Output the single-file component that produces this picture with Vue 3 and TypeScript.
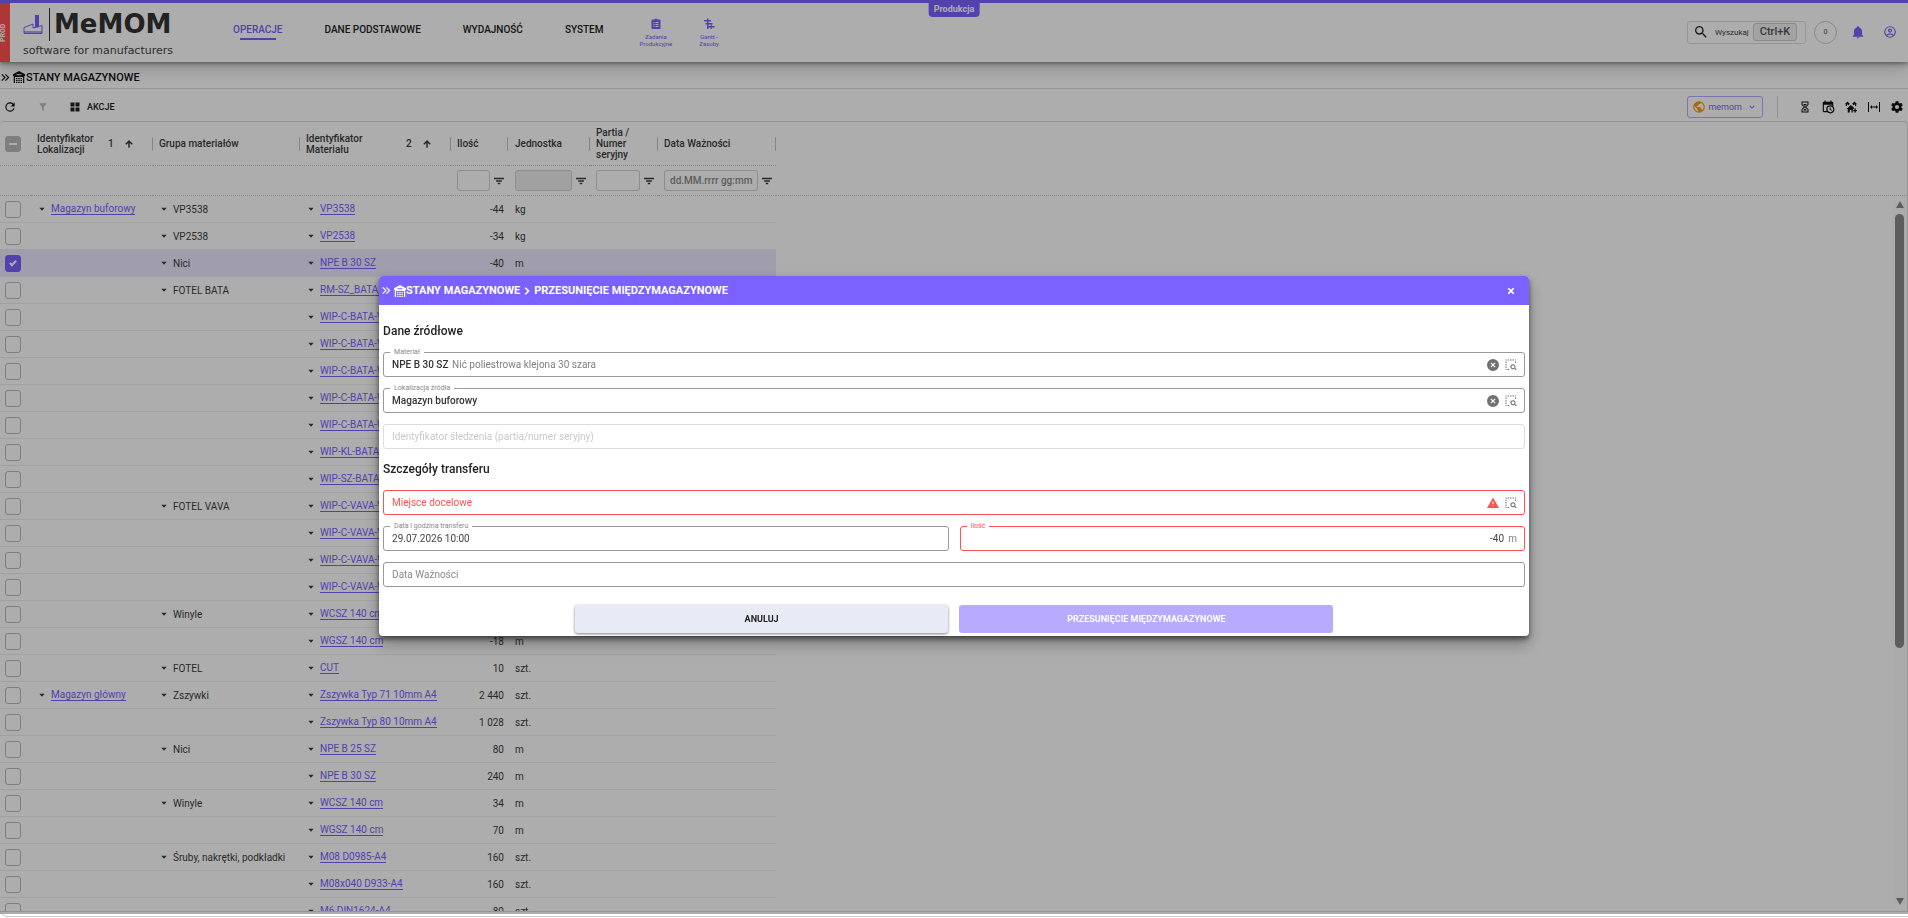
<script setup lang="ts">
import { ref } from 'vue'

interface StockRow {
  location?: string
  group?: string
  material: string
  quantity: string
  unit: string
  selected?: boolean
}

const icons: Record<string, string> = {
  refresh: 'M17.65,6.35C16.2,4.9 14.21,4 12,4A8,8 0 0,0 4,12A8,8 0 0,0 12,20C15.73,20 18.84,17.45 19.73,14H17.65C16.83,16.33 14.61,18 12,18A6,6 0 0,1 6,12A6,6 0 0,1 12,6C13.66,6 15.14,6.69 16.22,7.78L13,11H20V4L17.65,6.35Z',
  filter: 'M14,12V19.88C14.04,20.18 13.94,20.5 13.71,20.71C13.32,21.1 12.69,21.1 12.3,20.71L10.29,18.7C10.06,18.47 9.96,18.16 10,17.87V12H9.97L4.21,4.62C3.87,4.19 3.95,3.56 4.38,3.22C4.57,3.08 4.78,3 5,3H19C19.22,3 19.43,3.08 19.62,3.22C20.05,3.56 20.13,4.19 19.79,4.62L14.03,12H14Z',
  grid: 'M3,11H11V3H3M3,21H11V13H3M13,21H21V13H13M13,3V11H21V3',
  doubleChevron: 'M5.59,7.41L7,6L13,12L7,18L5.59,16.59L10.17,12L5.59,7.41M11.59,7.41L13,6L19,12L13,18L11.59,16.59L16.17,12L11.59,7.41Z',
  chevronRight: 'M8.59,16.58L13.17,12L8.59,7.41L10,6L16,12L10,18L8.59,16.58Z',
  chevronDown: 'M7.41,8.58L12,13.17L16.59,8.58L18,10L12,16L6,10L7.41,8.58Z',
  warehouse: 'M12,0L0,6.5V10H1.5V24H4V12H20V24H22.5V10H24V6.5L12,0M7,6.5H17V8.5H7V6.5M6,14H9V16.5H6V14M10.5,14H13.5V16.5H10.5V14M15,14H18V16.5H15V14M6,18H9V20.500H6V18M10.5,18H13.5V20.500H10.5V18M15,18H18V20.500H15V18M6,22H9V24H6V22M10.500,22H13.500V24H10.500V22M15,22H18V24H15V22',
  search: 'M9.5,3A6.5,6.5 0 0,1 16,9.5C16,11.11 15.41,12.59 14.44,13.73L14.71,14H15.5L20.5,19L19,20.5L14,15.5V14.71L13.73,14.44C12.59,15.41 11.11,16 9.5,16A6.5,6.5 0 0,1 3,9.5A6.5,6.5 0 0,1 9.5,3M9.5,5C7,5 5,7 5,9.5C5,12 7,14 9.5,14C12,14 14,12 14,9.5C14,7 12,5 9.5,5Z',
  bell: 'M21,19V20H3V19L5,17V11C5,7.9 7.03,5.17 10,4.29V4A2,2 0 0,1 12,2A2,2 0 0,1 14,4V4.29C16.97,5.17 19,7.9 19,11V17L21,19M14,21A2,2 0 0,1 12,23A2,2 0 0,1 10,21',
  account: 'M12,2A10,10 0 0,0 2,12A10,10 0 0,0 12,22A10,10 0 0,0 22,12A10,10 0 0,0 12,2M7.07,18.28C7.5,17.38 10.12,16.5 12,16.5C13.88,16.5 16.5,17.38 16.93,18.28C15.57,19.36 13.86,20 12,20C10.14,20 8.43,19.36 7.07,18.28M18.36,16.83C16.93,15.09 13.46,14.5 12,14.5C10.54,14.5 7.07,15.09 5.64,16.83C4.62,15.5 4,13.82 4,12C4,7.59 7.59,4 12,4C16.41,4 20,7.59 20,12C20,13.82 19.38,15.5 18.36,16.83M12,6C10.06,6 8.5,7.56 8.5,9.5C8.5,11.44 10.06,13 12,13C13.94,13 15.5,11.44 15.5,9.5C15.5,7.56 13.94,6 12,6M12,11A1.5,1.5 0 0,1 10.5,9.5A1.5,1.5 0 0,1 12,8A1.5,1.5 0 0,1 13.5,9.5A1.5,1.5 0 0,1 12,11Z',
  earth: 'M17.9,17.39C17.64,16.59 16.89,16 16,16H15V13A1,1 0 0,0 14,12H8V10H10A1,1 0 0,0 11,9V7H13A2,2 0 0,0 15,5V4.59C17.93,5.77 20,8.64 20,12C20,14.08 19.2,15.97 17.9,17.39M11,19.93C7.05,19.44 4,16.08 4,12C4,11.38 4.08,10.78 4.21,10.21L9,15V16A2,2 0 0,0 11,18M12,2A10,10 0 0,0 2,12A10,10 0 0,0 12,22A10,10 0 0,0 22,12A10,10 0 0,0 12,2Z',
  sand: 'M5,1H19V7.5L14.5,12L19,16.5V23H5V16.5L9.500,12L5,7.500V1M17,17L12,12.500L7,17V21H17V17M12,11.500L17,7V3H7V7L12,11.500M9,6H15V7L12,9.500L9,7V6M12,15L15,18V19H9V18L12,15Z',
  calendarClock: 'M15,13H16.5V15.82L18.94,17.23L18.19,18.53L15,16.69V13M19,8H5V19H9.67C9.24,18.09 9,17.07 9,16A7,7 0 0,1 16,9C17.07,9 18.09,9.24 19,9.67V8M5,21C3.89,21 3,20.1 3,19V5C3,3.89 3.89,3 5,3H6V1H8V3H16V1H18V3H19A2,2 0 0,1 21,5V11.1C22.24,12.36 23,14.09 23,16A7,7 0 0,1 16,23C14.09,23 12.36,22.24 11.1,21H5M16,11.15A4.85,4.85 0 0,0 11.15,16C11.15,18.68 13.32,20.85 16,20.85A4.85,4.85 0 0,0 20.85,16C20.85,13.32 18.68,11.15 16,11.15Z',
  homes: 'M5,1L0,6H1.500V10H4V7H6V9L8.500,7V6H10L5,1M19,1L14,6H15.500V7L18,9V7H20V10H22.500V6H24L19,1M11.500,8L3,16H5.500V23H9.500V18H13V23H15.500V17L19,14.500L11.500,8M19,15V18H16.500V20.500H19V23H21.500V20.500H24V18H21.500V15H19Z',
  expand: 'M0,2H2V22H0V2M22,2H24V22H22V2M8,8V11H16V8L20,12L16,16V13H8V16L4,12L8,8Z',
  cog: 'M12,15.5A3.5,3.5 0 0,1 8.5,12A3.5,3.5 0 0,1 12,8.5A3.5,3.5 0 0,1 15.5,12A3.5,3.5 0 0,1 12,15.5M19.43,12.97C19.47,12.65 19.5,12.33 19.5,12C19.5,11.67 19.47,11.34 19.43,11L21.54,9.37C21.73,9.22 21.78,8.95 21.66,8.73L19.66,5.27C19.54,5.05 19.27,4.96 19.05,5.05L16.56,6.05C16.04,5.66 15.5,5.32 14.87,5.07L14.5,2.42C14.46,2.18 14.25,2 14,2H10C9.75,2 9.54,2.18 9.5,2.42L9.13,5.07C8.5,5.32 7.96,5.66 7.44,6.05L4.95,5.05C4.73,4.96 4.46,5.05 4.34,5.27L2.34,8.73C2.21,8.95 2.27,9.22 2.46,9.37L4.57,11C4.53,11.34 4.5,11.67 4.5,12C4.5,12.33 4.53,12.65 4.57,12.97L2.46,14.63C2.27,14.78 2.21,15.05 2.34,15.27L4.34,18.73C4.46,18.95 4.73,19.03 4.95,18.95L7.44,17.94C7.96,18.34 8.5,18.68 9.13,18.93L9.5,21.58C9.54,21.82 9.75,22 10,22H14C14.25,22 14.46,21.82 14.5,21.58L14.87,18.93C15.5,18.67 16.04,18.34 16.56,17.94L19.05,18.95C19.27,19.03 19.54,18.95 19.66,18.73L21.66,15.27C21.78,15.05 21.73,14.78 21.54,14.63L19.43,12.97Z',
  arrowUp: 'M10.2,21V9.5L5.5,14L3,11.2L12,2.4L21,11.2L18.5,14L13.8,9.5V21H10.2Z',
  bars: 'M0,4H24V8H0V4M5,10H19V14H5V10M9,16H15V20H9V16Z',
  caret: 'M4,8H20L12,17Z',
  close: 'M20,6.8L17.2,4L12,9.2L6.8,4L4,6.8L9.2,12L4,17.2L6.8,20L12,14.8L17.2,20L20,17.2L14.8,12L20,6.8Z',
  clear: 'M12,0A12,12 0 1,0 12,24A12,12 0 1,0 12,0M17,15.4L15.4,17L12,13.6L8.6,17L7,15.4L10.4,12L7,8.6L8.6,7L12,10.4L15.4,7L17,8.6L13.6,12L17,15.4Z',
  alert: 'M13,14H11V9H13M13,18H11V16H13M0,22H24L12,1L0,22Z',
  pick: 'M1,1H3V3H1V1M5,1H8V3H5V1M10,1H13V3H10V1M15,1H18V3H15V1M20,1H22V3H20V1M1,5H3V8H1V5M1,10H3V13H1V10M1,15H3V18H1V15M1,20H3V22H1V20M5,20H8V22H5V20M20,5H22V8H20V5M16,10.5A5,5 0 0,1 20.3,18L23.5,21.2L22,22.7L18.8,19.5A5,5 0 1,1 16,10.5M16,12.5A3,3 0 1,0 16,18.5A3,3 0 1,0 16,12.5Z',
  clipboard: 'M19,3H14.8C14.4,1.8 13.3,1 12,1C10.7,1 9.6,1.8 9.2,3H5A2,2 0 0,0 3,5V20A2,2 0 0,0 5,22H19A2,2 0 0,0 21,20V5A2,2 0 0,0 19,3M7,8H9V10H7V8M11,8H17V10H11V8M7,12H9V14H7V12M11,12H17V14H11V12M7,16H9V18H7V16M11,16H17V18H11V16Z',
  gantt: 'M2,4H8V1H11V4H16V7H11V10H19V13H11V16H15V13.500H17.500V16H23V19H17.500V22H15V19H11V22H8V13H5V10H8V7H2V4Z',
}

const navItems = ['OPERACJE', 'DANE PODSTAWOWE', 'WYDAJNOŚĆ', 'SYSTEM']
const tools = [
  { icon: 'sand', label: 'Historia' },
  { icon: 'calendarClock', label: 'Kalendarz' },
  { icon: 'homes', label: 'Magazyny' },
  { icon: 'expand', label: 'Szerokość kolumn' },
  { icon: 'cog', label: 'Ustawienia' },
]

const rows = ref<StockRow[]>([
  { location: 'Magazyn buforowy', group: 'VP3538', material: 'VP3538', quantity: '-44', unit: 'kg' },
  { group: 'VP2538', material: 'VP2538', quantity: '-34', unit: 'kg' },
  { group: 'Nici', material: 'NPE B 30 SZ', quantity: '-40', unit: 'm', selected: true },
  { group: 'FOTEL BATA', material: 'RM-SZ_BATA_', quantity: '', unit: '' },
  { material: 'WIP-C-BATA-V', quantity: '', unit: '' },
  { material: 'WIP-C-BATA-V', quantity: '', unit: '' },
  { material: 'WIP-C-BATA-W', quantity: '', unit: '' },
  { material: 'WIP-C-BATA-W', quantity: '', unit: '' },
  { material: 'WIP-C-BATA-W', quantity: '', unit: '' },
  { material: 'WIP-KL-BATA-', quantity: '', unit: '' },
  { material: 'WIP-SZ-BATA-', quantity: '', unit: '' },
  { group: 'FOTEL VAVA', material: 'WIP-C-VAVA-V', quantity: '', unit: '' },
  { material: 'WIP-C-VAVA-V', quantity: '', unit: '' },
  { material: 'WIP-C-VAVA-W', quantity: '', unit: '' },
  { material: 'WIP-C-VAVA-W', quantity: '', unit: '' },
  { group: 'Winyle', material: 'WCSZ 140 cm', quantity: '', unit: '' },
  { material: 'WGSZ 140 cm', quantity: '-18', unit: 'm' },
  { group: 'FOTEL', material: 'CUT', quantity: '10', unit: 'szt.' },
  { location: 'Magazyn główny', group: 'Zszywki', material: 'Zszywka Typ 71 10mm A4', quantity: '2 440', unit: 'szt.' },
  { material: 'Zszywka Typ 80 10mm A4', quantity: '1 028', unit: 'szt.' },
  { group: 'Nici', material: 'NPE B 25 SZ', quantity: '80', unit: 'm' },
  { material: 'NPE B 30 SZ', quantity: '240', unit: 'm' },
  { group: 'Winyle', material: 'WCSZ 140 cm', quantity: '34', unit: 'm' },
  { material: 'WGSZ 140 cm', quantity: '70', unit: 'm' },
  { group: 'Śruby, nakrętki, podkładki', material: 'M08 D0985-A4', quantity: '160', unit: 'szt.' },
  { material: 'M08x040 D933-A4', quantity: '160', unit: 'szt.' },
  { material: 'M6 DIN1624-A4', quantity: '80', unit: 'szt.' },
])

const material = ref('NPE B 30 SZ')
const source = ref('Magazyn buforowy')
const tracking = ref('')
const target = ref('')
const transferDate = ref('29.07.2026 10:00')
const quantity = ref('-40')
const expiry = ref('')
</script>

<template>
  <div class="app">
    <header class="topbar">
      <div class="env-strip">PROD</div>
      <a class="brand" href="#">
        <span class="brand-main">
          <svg class="factory" viewBox="0 0 20 21" aria-hidden="true">
            <path d="M1 19.500V13.500L10 10V14L19 11.500V19.500Z" fill="none" stroke="currentColor" stroke-width="1" />
            <path d="M12 1H16V13L12 14Z" fill="currentColor" />
            <path d="M1 17H19V20H1Z" fill="currentColor" opacity=".6" />
          </svg>
          <span class="brand-name">MeMOM</span>
        </span>
        <span class="tagline">software for manufacturers</span>
      </a>
      <nav class="main-nav">
        <a v-for="(item, i) in navItems" :key="item" href="#" :class="{ active: i === 0 }">{{ item }}</a>
      </nav>
      <div class="shortcuts">
        <a href="#"><svg viewBox="0 0 24 24"><path :d="icons.clipboard" fill-rule="evenodd" /></svg>Zadania<br />Produkcyjne</a>
        <a href="#"><svg viewBox="0 0 24 24"><path :d="icons.gantt" /></svg>Gantt -<br />Zasoby</a>
      </div>
      <div class="top-actions">
        <button class="search" type="button">
          <svg class="i16" viewBox="0 0 24 24"><path :d="icons.search" /></svg>
          <span>Wyszukaj</span>
          <kbd>Ctrl+K</kbd>
        </button>
        <button class="counter" type="button">0</button>
        <button class="icon-btn violet" type="button" aria-label="Powiadomienia"><svg class="i14" viewBox="0 0 24 24"><path :d="icons.bell" /></svg></button>
        <button class="icon-btn violet" type="button" aria-label="Konto"><svg class="i14" viewBox="0 0 24 24"><path :d="icons.account" /></svg></button>
      </div>
      <div class="mode-badge">Produkcja</div>
    </header>

    <div class="crumbs">
      <svg class="double" viewBox="5 5 15 14"><path :d="icons.doubleChevron" /></svg>
      <h1><svg class="i12" viewBox="0 0 24 24"><path :d="icons.warehouse" fill-rule="evenodd" /></svg>STANY MAGAZYNOWE</h1>
    </div>

    <div class="toolbar">
      <button class="icon-btn" type="button" aria-label="Odśwież"><svg class="i14" viewBox="0 0 24 24"><path :d="icons.refresh" /></svg></button>
      <button class="icon-btn" type="button" aria-label="Filtr" disabled><svg class="i10" viewBox="0 0 24 24"><path :d="icons.filter" /></svg></button>
      <button class="actions-btn" type="button"><svg class="i12" viewBox="0 0 24 24"><path :d="icons.grid" /></svg>AKCJE</button>
      <div class="toolbar-right">
        <button class="tenant" type="button">
          <svg class="i14 orange" viewBox="0 0 24 24"><path :d="icons.earth" /></svg>
          <span>memom</span>
          <svg class="i10" viewBox="0 0 24 24"><path :d="icons.chevronDown" /></svg>
        </button>
        <div class="tools">
          <button v-for="tool in tools" :key="tool.icon" class="icon-btn" type="button" :aria-label="tool.label">
            <svg :class="tool.icon === 'cog' || tool.icon === 'calendarClock' ? 'i14' : 'i12'" viewBox="0 0 24 24"><path :d="icons[tool.icon]" fill-rule="evenodd" /></svg>
          </button>
        </div>
      </div>
    </div>

    <main class="grid">
      <table>
        <colgroup>
          <col class="c-check" /><col class="c-loc" /><col class="c-group" /><col class="c-mat" /><col class="c-qty" />
          <col class="c-unit" /><col class="c-lot" /><col class="c-date" /><col />
        </colgroup>
        <thead>
          <tr class="titles">
            <th><input type="checkbox" class="partial" aria-label="Zaznacz wszystkie" /></th>
            <th><div class="th sorted"><span>Identyfikator Lokalizacji</span><i>1</i><svg class="i10" viewBox="0 0 24 24"><path :d="icons.arrowUp" /></svg></div></th>
            <th><div class="th">Grupa materiałów</div></th>
            <th><div class="th sorted mat"><span>Identyfikator Materiału</span><i>2</i><svg class="i10" viewBox="0 0 24 24"><path :d="icons.arrowUp" /></svg></div></th>
            <th><div class="th">Ilość</div></th>
            <th><div class="th">Jednostka</div></th>
            <th><div class="th">Partia /<br />Numer<br />seryjny</div></th>
            <th><div class="th">Data Ważności</div></th>
            <th class="filler"></th>
          </tr>
          <tr class="filters">
            <th></th><th></th><th></th><th></th>
            <th><div class="filter"><input type="text" aria-label="Ilość" /><svg class="i10" viewBox="0 0 24 24"><path :d="icons.bars" /></svg></div></th>
            <th><div class="filter"><input type="text" aria-label="Jednostka" disabled /><svg class="i10" viewBox="0 0 24 24"><path :d="icons.bars" /></svg></div></th>
            <th><div class="filter"><input type="text" aria-label="Partia / Numer seryjny" /><svg class="i10" viewBox="0 0 24 24"><path :d="icons.bars" /></svg></div></th>
            <th><div class="filter"><input type="text" placeholder="dd.MM.rrrr gg:mm" aria-label="Data Ważności" /><svg class="i10" viewBox="0 0 24 24"><path :d="icons.bars" /></svg></div></th>
            <th></th>
          </tr>
        </thead>
        <tbody>
          <tr v-for="(row, i) in rows" :key="i" :class="{ selected: row.selected }">
            <td><input v-model="row.selected" type="checkbox" :aria-label="row.material" /></td>
            <td><div v-if="row.location" class="cell"><svg class="i8" viewBox="0 0 24 24"><path :d="icons.caret" /></svg><a href="#">{{ row.location }}</a></div></td>
            <td><div v-if="row.group" class="cell"><svg class="i8" viewBox="0 0 24 24"><path :d="icons.caret" /></svg>{{ row.group }}</div></td>
            <td><div class="cell"><svg class="i8" viewBox="0 0 24 24"><path :d="icons.caret" /></svg><a href="#">{{ row.material }}</a></div></td>
            <td class="num">{{ row.quantity }}</td>
            <td class="unit">{{ row.unit }}</td>
            <td></td>
            <td></td>
            <td class="filler"></td>
          </tr>
        </tbody>
      </table>
      <div class="scrollbar" aria-hidden="true">
        <span class="tip up"></span>
        <span class="rail"><span class="thumb"></span></span>
        <span class="tip down"></span>
      </div>
    </main>

    <div class="backdrop">
      <section class="dialog" role="dialog" aria-modal="true" aria-labelledby="dialog-title">
        <header>
          <svg class="double" viewBox="5 5 15 14"><path :d="icons.doubleChevron" /></svg>
          <h2 id="dialog-title">
            <svg class="i12" viewBox="0 0 24 24"><path :d="icons.warehouse" fill-rule="evenodd" /></svg><span>STANY MAGAZYNOWE</span>
            <svg class="i14 sep" viewBox="0 0 24 24"><path :d="icons.chevronRight" /></svg><span>PRZESUNIĘCIE MIĘDZYMAGAZYNOWE</span>
          </h2>
          <button class="close" type="button" aria-label="Zamknij"><svg class="i10" viewBox="0 0 24 24"><path :d="icons.close" /></svg></button>
        </header>
        <form @submit.prevent>
          <h3>Dane źródłowe</h3>
          <div class="field">
            <label for="f-material">Materiał</label>
            <input id="f-material" v-model="material" class="strong code" type="text" />
            <span class="hint">Nić poliestrowa klejona 30 szara</span>
            <button type="button" aria-label="Wyczyść materiał"><svg class="i12" viewBox="0 0 24 24"><path :d="icons.clear" fill-rule="evenodd" /></svg></button>
            <button type="button" aria-label="Wybierz materiał"><svg class="i12" viewBox="0 0 24 24"><path :d="icons.pick" fill-rule="evenodd" /></svg></button>
          </div>
          <div class="field">
            <label for="f-source">Lokalizacja źródła</label>
            <input id="f-source" v-model="source" class="strong" type="text" />
            <button type="button" aria-label="Wyczyść lokalizację"><svg class="i12" viewBox="0 0 24 24"><path :d="icons.clear" fill-rule="evenodd" /></svg></button>
            <button type="button" aria-label="Wybierz lokalizację"><svg class="i12" viewBox="0 0 24 24"><path :d="icons.pick" fill-rule="evenodd" /></svg></button>
          </div>
          <div class="field off">
            <input v-model="tracking" type="text" placeholder="Identyfikator śledzenia (partia/numer seryjny)" aria-label="Identyfikator śledzenia (partia/numer seryjny)" disabled />
          </div>
          <h3>Szczegóły transferu</h3>
          <div class="field error">
            <input v-model="target" type="text" placeholder="Miejsce docelowe" aria-label="Miejsce docelowe" />
            <svg class="i12 alert" viewBox="0 0 24 24"><path :d="icons.alert" fill-rule="evenodd" /></svg>
            <button type="button" aria-label="Wybierz miejsce docelowe"><svg class="i12" viewBox="0 0 24 24"><path :d="icons.pick" fill-rule="evenodd" /></svg></button>
          </div>
          <div class="pair">
            <div class="field">
              <label for="f-date">Data i godzina transferu</label>
              <input id="f-date" v-model="transferDate" type="text" />
            </div>
            <div class="field error">
              <label for="f-qty">Ilość</label>
              <input id="f-qty" v-model="quantity" class="right" type="text" />
              <span class="suffix">m</span>
            </div>
          </div>
          <div class="field">
            <input v-model="expiry" type="text" placeholder="Data Ważności" aria-label="Data Ważności" />
          </div>
          <div class="buttons">
            <button class="cancel" type="button">ANULUJ</button>
            <button class="submit" type="submit" disabled>PRZESUNIĘCIE MIĘDZYMAGAZYNOWE</button>
          </div>
        </form>
      </section>
    </div>
  </div>
</template>

<style>
body { margin: 0; overflow: hidden; background: #fff; }
</style>

<style scoped>
* { box-sizing: border-box; }
.app {
  display: flex;
  flex-direction: column;
  height: calc(100vh - 1px);
  padding-bottom: 4px;
  border-bottom: 1px solid #ccc;
  border-radius: 0 0 0 8px;
  font-family: Roboto, "Noto Sans", sans-serif;
  font-size: 10px;
  color: #3c3c3c;
}
button, input { font: inherit; color: inherit; margin: 0; }
button { padding: 0; border: 0; background: none; }
a { color: #7b61ff; text-decoration: none; }
svg { display: block; flex: none; fill: currentColor; }
.i8 { width: 8px; height: 8px; }
.i10 { width: 10px; height: 10px; }
.i12 { width: 12px; height: 12px; }
.i14 { width: 14px; height: 14px; }
.i16 { width: 16px; height: 16px; }
.double { width: 9px; height: 9px; }

.topbar {
  position: relative;
  z-index: 1;
  flex: none;
  display: flex;
  align-items: center;
  height: 62px;
  border-top: 3px solid #7b61ff;
  background: #fff;
  box-shadow: 0 2px 4px rgba(0, 0, 0, .35), 0 6px 16px rgba(0, 0, 0, .2);
}
.env-strip {
  align-self: stretch;
  width: 10px;
  padding-left: 4px;
  background: #ff5252;
  color: #fff;
  font-size: 7px;
  font-weight: 700;
  line-height: 6px;
  text-align: center;
  writing-mode: vertical-rl;
  transform: rotate(180deg);
}
.brand { display: flex; flex-direction: column; gap: 4px; margin-left: 13px; width: 149px; white-space: nowrap; }
.brand-main { display: flex; align-items: center; height: 33px; }
.factory { width: 20px; height: 21px; color: #7b61ff; margin-right: 6px; }
.brand-name {
  border-left: 1px solid #333;
  padding-left: 4px;
  color: #333;
  font-family: "DejaVu Sans", sans-serif;
  font-size: 26px;
  font-weight: 700;
  line-height: 33px;
}
.tagline { color: #444; font-family: "DejaVu Sans", sans-serif; font-size: 11px; line-height: 12px; }
.main-nav { display: flex; gap: 42px; margin-left: 61px; font-weight: 500; line-height: 16px; }
.main-nav a { display: flex; flex-direction: column; align-items: center; color: #222; padding-bottom: 10px; margin-top: 5px; }
.main-nav a.active { color: #7b61ff; padding-bottom: 8px; }
.main-nav a.active::after { content: ""; width: 36px; height: 2px; background: #7b61ff; }
.shortcuts { display: flex; gap: 27px; margin-left: 36px; font-size: 6px; line-height: 7px; text-align: center; }
.shortcuts svg { width: 12px; height: 12px; margin: 0 auto 3px; }
.top-actions { display: flex; align-items: center; margin-left: auto; padding-right: 9px; margin-top: -1px; }
.search { display: flex; align-items: center; width: 119px; height: 23px; padding-left: 5px; border: 1px solid #dedede; border-radius: 3px; font-size: 8px; }
.search svg { color: #222; margin-right: 6px; }
.search kbd { display: block; margin-left: auto; margin-right: 8px; width: 44px; border: 1px solid #ccc; border-radius: 3px; background: #f0f0f0; color: #555; font: 500 11px/16px Roboto, sans-serif; text-align: center; }
.counter { width: 23px; height: 23px; margin: 0 12px 0 8px; border: 1px solid #ccc; border-radius: 50%; color: #777; font-size: 7px; font-weight: 500; }
.icon-btn { display: flex; align-items: center; justify-content: center; width: 18px; height: 18px; color: #111; }
.icon-btn:disabled { color: #bbb; }
.violet { color: #7b61ff; }
.violet + .violet { margin-left: 14px; }
.mode-badge {
  position: absolute;
  top: 0;
  left: 50%;
  transform: translateX(-50%);
  padding: 0 5px 2px;
  border-radius: 0 0 4px 4px;
  background: #7b61ff;
  color: #fff;
  font-weight: 700;
  font-size: 9px;
  line-height: 12px;
}

.crumbs { flex: none; display: flex; align-items: center; gap: 3px; height: 27px; padding: 4px 0 0 1px; border-bottom: 1px solid #dcdcdc; color: #111; }
h1 { display: flex; align-items: center; gap: 1px; margin: 0; font-size: 11px; font-weight: 500; }

.toolbar { flex: none; display: flex; align-items: center; height: 32px; padding: 4px 2px 0 1px; }
.toolbar > .icon-btn + .icon-btn { margin-left: 15px; }
.actions-btn { display: flex; align-items: center; gap: 6px; margin-left: 17px; color: #222; font-size: 9px; font-weight: 500; }
.toolbar-right { display: flex; align-items: center; gap: 14px; margin-left: auto; }
.tenant { display: flex; align-items: center; justify-content: flex-end; gap: 2px; width: 76px; height: 22px; padding-right: 5px; border: 1px solid #b8aaff; border-radius: 3px; color: #7b61ff; font-size: 9px; }
.tenant span { margin-right: 3px; }
.orange { color: #f90; }
.tools { display: flex; gap: 5px; align-items: center; height: 22px; padding-left: 18px; border-left: 1px solid #d4d4d4; }

.grid { position: relative; flex: 1; min-height: 0; overflow: hidden; border: 1px solid #dcdcdc; border-left: 0; border-radius: 4px 4px 0 0; }
table { width: 100%; table-layout: fixed; border-collapse: separate; border-spacing: 0; }
.c-check { width: 31px; }
.c-loc { width: 122px; }
.c-group { width: 147px; }
.c-mat { width: 151px; }
.c-qty { width: 57px; }
.c-unit { width: 82px; }
.c-lot { width: 68px; }
.c-date { width: 118px; }
th, td { padding: 0 0 0 6px; text-align: left; font-weight: 400; }
th:first-child, td:first-child { padding-left: 5px; }
th { font-weight: 500; line-height: 11px; border-bottom: 1px dotted #c8c8c8; }
.titles th { height: 44px; }
.titles th.filler { border-bottom: 0; }
.th { display: flex; align-items: center; min-height: 13px; position: relative; }
th:not(:first-child) .th::after { content: ""; position: absolute; right: 0; top: 50%; height: 13px; border-right: 1px solid #c4c4c4; transform: translateY(-50%); }
.sorted span { width: 66px; }
.sorted i { margin-left: 5px; font-style: normal; }
.sorted svg { margin-left: 10px; }
.sorted.mat i { margin-left: 34px; }
.filters th { height: 30px; }
.filter { display: flex; align-items: center; gap: 4px; }
.filter input { flex: 1; min-width: 0; height: 21px; padding: 0 0 0 5px; border: 1px solid #d0d0d0; border-radius: 3px; background: transparent; }
.filter input:disabled { background: #eee; }
.filter svg { margin-right: 4px; }
input::placeholder { color: #8a8a8a; opacity: 1; }
td { height: 27px; border-bottom: 1px solid #eee; white-space: nowrap; }
td.filler { border-bottom: 0; }
.selected td:not(.filler) { background: #ece8ff; }
.cell { display: flex; align-items: center; gap: 5px; padding-left: 1px; }
.cell a { border-bottom: 1px solid #7b61ff; line-height: 11px; }
td.num { padding-right: 4px; text-align: right; }
td.unit, .titles th:nth-child(6), .filters th:nth-child(6) { padding-left: 7px; }
input[type="checkbox"] {
  appearance: none;
  position: relative;
  display: block;
  width: 16px;
  height: 17px;
  border: 1px solid #bbb;
  border-radius: 3px;
}
input[type="checkbox"]:checked { background: #7b61ff; border-color: #7b61ff; }
input[type="checkbox"]:checked::before { content: ""; position: absolute; left: 5px; top: 3px; width: 4px; height: 7px; border: solid #fff; border-width: 0 2px 2px 0; transform: rotate(45deg); box-sizing: content-box; width: 2px; height: 5px; }
input[type="checkbox"].partial { height: 16px; background: #bbb; }
.partial::before { content: ""; position: absolute; left: 3px; top: 6px; width: 8px; height: 2px; background: #fff; }

.scrollbar { position: absolute; top: 79px; right: 1px; bottom: 6px; width: 13px; display: flex; flex-direction: column; align-items: center; gap: 6px; background: #fdfdfd; }
.tip { flex: none; border: 4px solid transparent; }
.tip.up { border-top: 0; border-bottom: 7px solid #888; }
.tip.down { border-bottom: 0; border-top: 7px solid #888; }
.rail { flex: 1; width: 9px; }
.thumb { display: block; height: 64%; border-radius: 5px; background: #8a8a8a; }

.backdrop { position: fixed; inset: 0 0 4px; z-index: 5; display: flex; align-items: center; justify-content: center; padding-bottom: 2px; background: rgba(0, 0, 0, .32); }
.dialog { width: calc(60% + 5px); background: #fff; border-radius: 4px; box-shadow: 0 3px 5px rgba(0, 0, 0, .5), 0 8px 16px rgba(0, 0, 0, .3); }
.dialog > header { display: flex; align-items: center; gap: 3px; height: 29px; padding: 0 13px 0 3px; border-radius: 4px 4px 0 0; background: #7b61ff; color: #fff; }
h2 { display: flex; align-items: center; margin: 0; font-size: 11px; font-weight: 700; white-space: nowrap; }
.sep { stroke: #fff; stroke-width: 1; }
.close { margin-left: auto; }
form { display: flex; flex-direction: column; gap: 11px; padding: 18px 4px 3px; color: #444; }
h3 { margin: 0; height: 18px; color: #222; font-size: 12px; font-weight: 500; line-height: 16px; }
.field + h3 { margin-top: 1px; }
.field { position: relative; display: flex; align-items: center; gap: 6px; height: 25px; padding: 0 7px 0 8px; border: 1px solid #999; border-radius: 3px; }
.field label { position: absolute; left: 6px; top: -5px; padding: 0 4px; background: #fff; color: #888; font-size: 7px; line-height: 8px; }
.field input { flex: 1; min-width: 0; height: 20px; padding: 0; border: 0; outline: 0; background: transparent; }
.field input.code { flex: none; width: 60px; margin-right: -6px; }
.field .strong { color: #333; font-weight: 500; }
.field button { color: #707070; }
.hint { flex: 1; color: #808080; }
.off { border-color: #ddd; }
.off input::placeholder { color: #c8c8c8; }
.error { border-color: #ff5252; }
.error label, .error input::placeholder, .alert { color: #ff5252; }
.right { text-align: right; }
.suffix { color: #808080; }
.field .right + .suffix { margin-left: -2px; }
.pair { display: flex; gap: 11px; }
.pair .field { flex: 1; }
.buttons { display: flex; justify-content: center; gap: 11px; margin-top: 7px; }
.buttons button { width: calc(33% - 3px); height: 28px; border-radius: 3px; font-size: 9px; font-weight: 700; }
.buttons .cancel { background: #e8eaf6; color: #222; box-shadow: 0 1px 3px rgba(0, 0, 0, .5); }
.buttons .submit { background: #b8aaff; color: #fff; }
</style>
